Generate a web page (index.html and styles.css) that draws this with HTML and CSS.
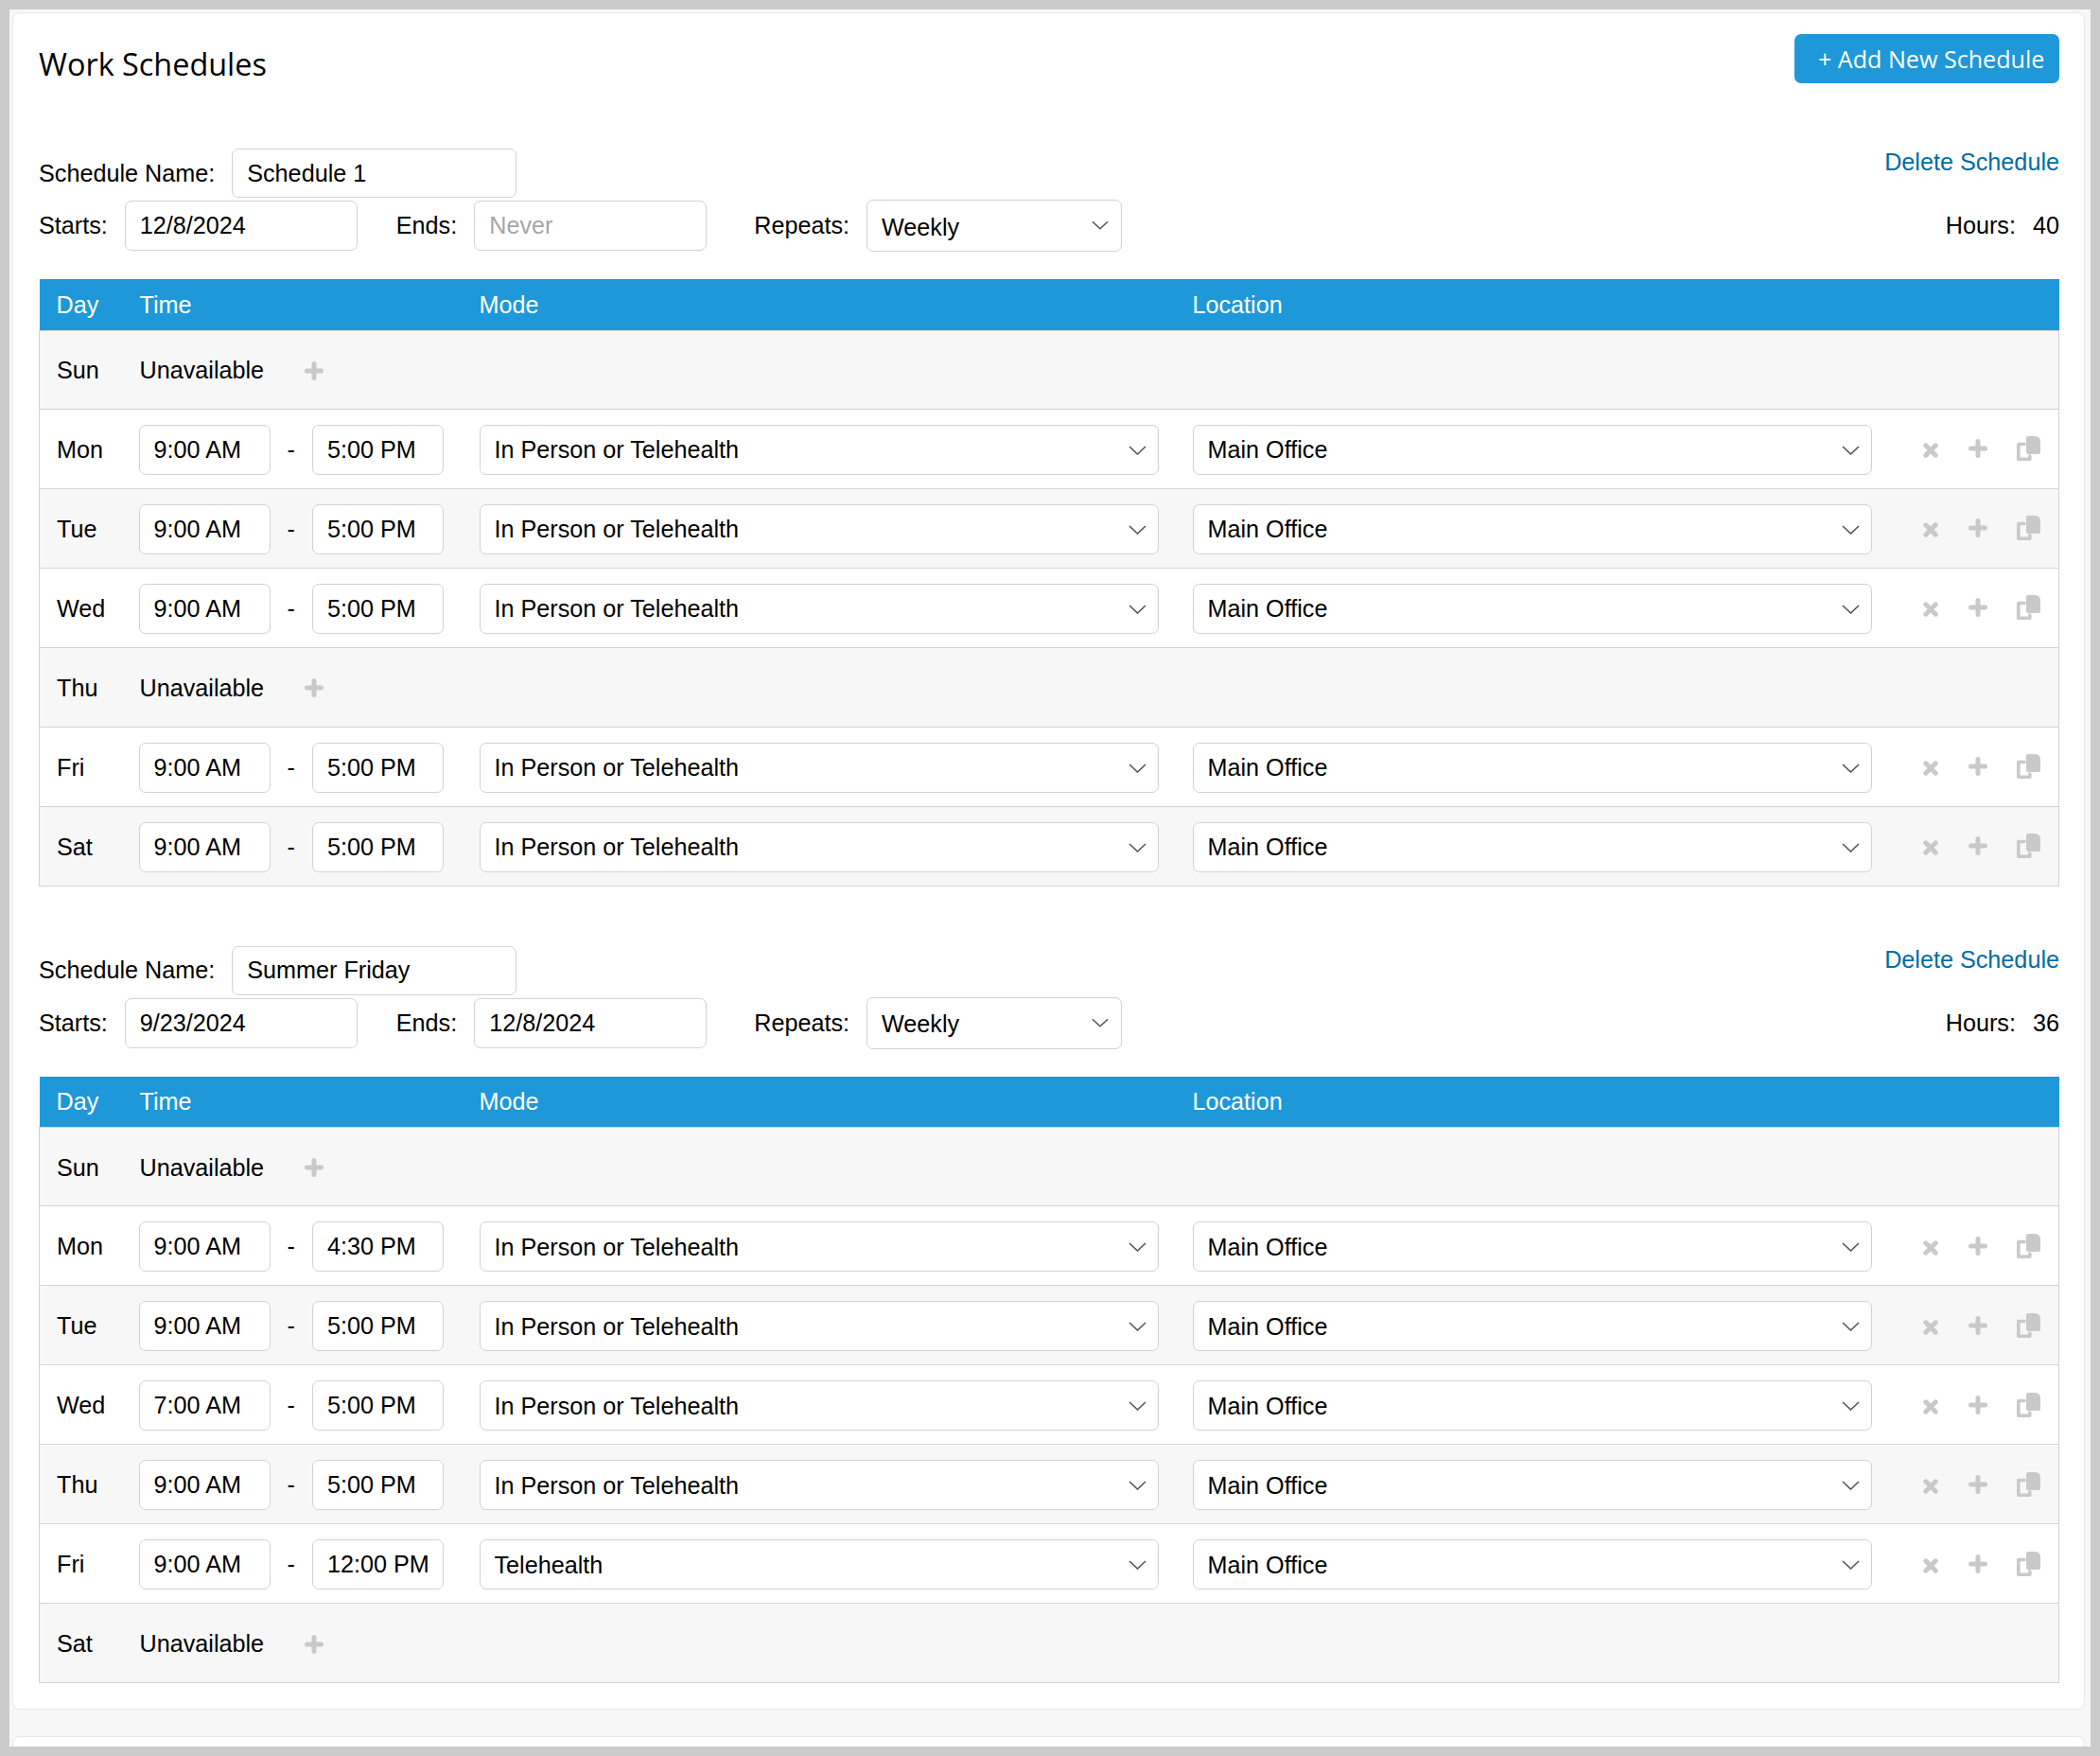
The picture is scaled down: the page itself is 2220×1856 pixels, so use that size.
FILE: index.html
```html
<!DOCTYPE html>
<html lang="en">
<head>
    <meta charset="UTF-8">
    <title>Work Schedules</title>
    <link rel="stylesheet" href="styles.css">
</head>
<body>
    <svg class="icon-defs" width="0" height="0">
        <symbol id="icon-x" viewBox="0 0 16 16">
            <path d="M2.800 2.800l10.400 10.400M13.200 2.800L2.800 13.200" fill="none" stroke="currentColor" stroke-width="5" stroke-linecap="round"></path>
        </symbol>
        <symbol id="icon-plus" viewBox="0 0 20 20">
            <path d="M10 2.500v15M2.500 10h15" fill="none" stroke="currentColor" stroke-width="5" stroke-linecap="round"></path>
        </symbol>
        <symbol id="icon-copy" viewBox="0 0 26 26">
            <path d="M8 8.500H1.800v15.700h12V21" fill="none" stroke="currentColor" stroke-width="3.600" stroke-linejoin="round" stroke-linecap="round"></path>
            <path d="M12 0h7.500a5.500 5.500 0 0 1 5.500 5.500V17a2 2 0 0 1-2 2H12a2 2 0 0 1-2-2V2a2 2 0 0 1 2-2z" fill="currentColor"></path>
        </symbol>
        <symbol id="icon-chevron" viewBox="0 0 19 10">
            <path d="M1 1l8.500 8L18 1" fill="none" stroke="currentColor" stroke-width="1.600"></path>
        </symbol>
    </svg>

    <div class="page">
        <div class="card">
            <div class="card-head">
                <h1 class="page-title">Work Schedules</h1>
                <button class="add-btn">+ Add New Schedule</button>
            </div>

            <!-- Schedule 1 -->
            <section class="schedule">
                <div class="schedule-top">
                    <div class="schedule-fields">
                        <div class="field-row">
                            <label>Schedule Name:</label>
                            <input class="input input-name" type="text" value="Schedule 1">
                        </div>
                        <div class="field-row field-row-dates">
                            <label>Starts:</label>
                            <input class="input input-date" type="text" value="12/8/2024">
                            <label class="label-ends">Ends:</label>
                            <input class="input input-date" type="text" placeholder="Never">
                            <label class="label-repeats">Repeats:</label>
                            <div class="select-wrap select-repeats">
                                <select class="select"><option>Weekly</option></select>
                                <svg class="chevron"><use href="#icon-chevron"></use></svg>
                            </div>
                        </div>
                    </div>
                    <div class="schedule-meta">
                        <a class="delete-link" href="#">Delete Schedule</a>
                        <div class="hours"><span>Hours:</span><span>40</span></div>
                    </div>
                </div>

                <table class="days">
                    <colgroup>
                        <col class="col-day"><col class="col-time"><col class="col-mode"><col class="col-location"><col>
                    </colgroup>
                    <thead>
                        <tr><th>Day</th><th>Time</th><th>Mode</th><th>Location</th><th></th></tr>
                    </thead>
                    <tbody>
                        <tr>
                            <td>Sun</td>
                            <td colspan="4"><div class="unavailable">Unavailable <svg class="icon icon-plus"><use href="#icon-plus"></use></svg></div></td>
                        </tr>
                        <tr>
                            <td>Mon</td>
                            <td><div class="time-range"><input class="input input-time" type="text" value="9:00 AM"><span>-</span><input class="input input-time" type="text" value="5:00 PM"></div></td>
                            <td><div class="select-wrap select-mode"><select class="select"><option>In Person or Telehealth</option></select><svg class="chevron"><use href="#icon-chevron"></use></svg></div></td>
                            <td><div class="select-wrap select-location"><select class="select"><option>Main Office</option></select><svg class="chevron"><use href="#icon-chevron"></use></svg></div></td>
                            <td><div class="row-actions"><svg class="icon icon-x"><use href="#icon-x"></use></svg><svg class="icon icon-plus"><use href="#icon-plus"></use></svg><svg class="icon icon-copy"><use href="#icon-copy"></use></svg></div></td>
                        </tr>
                        <tr>
                            <td>Tue</td>
                            <td><div class="time-range"><input class="input input-time" type="text" value="9:00 AM"><span>-</span><input class="input input-time" type="text" value="5:00 PM"></div></td>
                            <td><div class="select-wrap select-mode"><select class="select"><option>In Person or Telehealth</option></select><svg class="chevron"><use href="#icon-chevron"></use></svg></div></td>
                            <td><div class="select-wrap select-location"><select class="select"><option>Main Office</option></select><svg class="chevron"><use href="#icon-chevron"></use></svg></div></td>
                            <td><div class="row-actions"><svg class="icon icon-x"><use href="#icon-x"></use></svg><svg class="icon icon-plus"><use href="#icon-plus"></use></svg><svg class="icon icon-copy"><use href="#icon-copy"></use></svg></div></td>
                        </tr>
                        <tr>
                            <td>Wed</td>
                            <td><div class="time-range"><input class="input input-time" type="text" value="9:00 AM"><span>-</span><input class="input input-time" type="text" value="5:00 PM"></div></td>
                            <td><div class="select-wrap select-mode"><select class="select"><option>In Person or Telehealth</option></select><svg class="chevron"><use href="#icon-chevron"></use></svg></div></td>
                            <td><div class="select-wrap select-location"><select class="select"><option>Main Office</option></select><svg class="chevron"><use href="#icon-chevron"></use></svg></div></td>
                            <td><div class="row-actions"><svg class="icon icon-x"><use href="#icon-x"></use></svg><svg class="icon icon-plus"><use href="#icon-plus"></use></svg><svg class="icon icon-copy"><use href="#icon-copy"></use></svg></div></td>
                        </tr>
                        <tr>
                            <td>Thu</td>
                            <td colspan="4"><div class="unavailable">Unavailable <svg class="icon icon-plus"><use href="#icon-plus"></use></svg></div></td>
                        </tr>
                        <tr>
                            <td>Fri</td>
                            <td><div class="time-range"><input class="input input-time" type="text" value="9:00 AM"><span>-</span><input class="input input-time" type="text" value="5:00 PM"></div></td>
                            <td><div class="select-wrap select-mode"><select class="select"><option>In Person or Telehealth</option></select><svg class="chevron"><use href="#icon-chevron"></use></svg></div></td>
                            <td><div class="select-wrap select-location"><select class="select"><option>Main Office</option></select><svg class="chevron"><use href="#icon-chevron"></use></svg></div></td>
                            <td><div class="row-actions"><svg class="icon icon-x"><use href="#icon-x"></use></svg><svg class="icon icon-plus"><use href="#icon-plus"></use></svg><svg class="icon icon-copy"><use href="#icon-copy"></use></svg></div></td>
                        </tr>
                        <tr>
                            <td>Sat</td>
                            <td><div class="time-range"><input class="input input-time" type="text" value="9:00 AM"><span>-</span><input class="input input-time" type="text" value="5:00 PM"></div></td>
                            <td><div class="select-wrap select-mode"><select class="select"><option>In Person or Telehealth</option></select><svg class="chevron"><use href="#icon-chevron"></use></svg></div></td>
                            <td><div class="select-wrap select-location"><select class="select"><option>Main Office</option></select><svg class="chevron"><use href="#icon-chevron"></use></svg></div></td>
                            <td><div class="row-actions"><svg class="icon icon-x"><use href="#icon-x"></use></svg><svg class="icon icon-plus"><use href="#icon-plus"></use></svg><svg class="icon icon-copy"><use href="#icon-copy"></use></svg></div></td>
                        </tr>
                    </tbody>
                </table>
            </section>

            <!-- Summer Friday -->
            <section class="schedule">
                <div class="schedule-top">
                    <div class="schedule-fields">
                        <div class="field-row">
                            <label>Schedule Name:</label>
                            <input class="input input-name" type="text" value="Summer Friday">
                        </div>
                        <div class="field-row field-row-dates">
                            <label>Starts:</label>
                            <input class="input input-date" type="text" value="9/23/2024">
                            <label class="label-ends">Ends:</label>
                            <input class="input input-date" type="text" value="12/8/2024">
                            <label class="label-repeats">Repeats:</label>
                            <div class="select-wrap select-repeats">
                                <select class="select"><option>Weekly</option></select>
                                <svg class="chevron"><use href="#icon-chevron"></use></svg>
                            </div>
                        </div>
                    </div>
                    <div class="schedule-meta">
                        <a class="delete-link" href="#">Delete Schedule</a>
                        <div class="hours"><span>Hours:</span><span>36</span></div>
                    </div>
                </div>

                <table class="days">
                    <colgroup>
                        <col class="col-day"><col class="col-time"><col class="col-mode"><col class="col-location"><col>
                    </colgroup>
                    <thead>
                        <tr><th>Day</th><th>Time</th><th>Mode</th><th>Location</th><th></th></tr>
                    </thead>
                    <tbody>
                        <tr>
                            <td>Sun</td>
                            <td colspan="4"><div class="unavailable">Unavailable <svg class="icon icon-plus"><use href="#icon-plus"></use></svg></div></td>
                        </tr>
                        <tr>
                            <td>Mon</td>
                            <td><div class="time-range"><input class="input input-time" type="text" value="9:00 AM"><span>-</span><input class="input input-time" type="text" value="4:30 PM"></div></td>
                            <td><div class="select-wrap select-mode"><select class="select"><option>In Person or Telehealth</option></select><svg class="chevron"><use href="#icon-chevron"></use></svg></div></td>
                            <td><div class="select-wrap select-location"><select class="select"><option>Main Office</option></select><svg class="chevron"><use href="#icon-chevron"></use></svg></div></td>
                            <td><div class="row-actions"><svg class="icon icon-x"><use href="#icon-x"></use></svg><svg class="icon icon-plus"><use href="#icon-plus"></use></svg><svg class="icon icon-copy"><use href="#icon-copy"></use></svg></div></td>
                        </tr>
                        <tr>
                            <td>Tue</td>
                            <td><div class="time-range"><input class="input input-time" type="text" value="9:00 AM"><span>-</span><input class="input input-time" type="text" value="5:00 PM"></div></td>
                            <td><div class="select-wrap select-mode"><select class="select"><option>In Person or Telehealth</option></select><svg class="chevron"><use href="#icon-chevron"></use></svg></div></td>
                            <td><div class="select-wrap select-location"><select class="select"><option>Main Office</option></select><svg class="chevron"><use href="#icon-chevron"></use></svg></div></td>
                            <td><div class="row-actions"><svg class="icon icon-x"><use href="#icon-x"></use></svg><svg class="icon icon-plus"><use href="#icon-plus"></use></svg><svg class="icon icon-copy"><use href="#icon-copy"></use></svg></div></td>
                        </tr>
                        <tr>
                            <td>Wed</td>
                            <td><div class="time-range"><input class="input input-time" type="text" value="7:00 AM"><span>-</span><input class="input input-time" type="text" value="5:00 PM"></div></td>
                            <td><div class="select-wrap select-mode"><select class="select"><option>In Person or Telehealth</option></select><svg class="chevron"><use href="#icon-chevron"></use></svg></div></td>
                            <td><div class="select-wrap select-location"><select class="select"><option>Main Office</option></select><svg class="chevron"><use href="#icon-chevron"></use></svg></div></td>
                            <td><div class="row-actions"><svg class="icon icon-x"><use href="#icon-x"></use></svg><svg class="icon icon-plus"><use href="#icon-plus"></use></svg><svg class="icon icon-copy"><use href="#icon-copy"></use></svg></div></td>
                        </tr>
                        <tr>
                            <td>Thu</td>
                            <td><div class="time-range"><input class="input input-time" type="text" value="9:00 AM"><span>-</span><input class="input input-time" type="text" value="5:00 PM"></div></td>
                            <td><div class="select-wrap select-mode"><select class="select"><option>In Person or Telehealth</option></select><svg class="chevron"><use href="#icon-chevron"></use></svg></div></td>
                            <td><div class="select-wrap select-location"><select class="select"><option>Main Office</option></select><svg class="chevron"><use href="#icon-chevron"></use></svg></div></td>
                            <td><div class="row-actions"><svg class="icon icon-x"><use href="#icon-x"></use></svg><svg class="icon icon-plus"><use href="#icon-plus"></use></svg><svg class="icon icon-copy"><use href="#icon-copy"></use></svg></div></td>
                        </tr>
                        <tr>
                            <td>Fri</td>
                            <td><div class="time-range"><input class="input input-time" type="text" value="9:00 AM"><span>-</span><input class="input input-time" type="text" value="12:00 PM"></div></td>
                            <td><div class="select-wrap select-mode"><select class="select"><option>Telehealth</option></select><svg class="chevron"><use href="#icon-chevron"></use></svg></div></td>
                            <td><div class="select-wrap select-location"><select class="select"><option>Main Office</option></select><svg class="chevron"><use href="#icon-chevron"></use></svg></div></td>
                            <td><div class="row-actions"><svg class="icon icon-x"><use href="#icon-x"></use></svg><svg class="icon icon-plus"><use href="#icon-plus"></use></svg><svg class="icon icon-copy"><use href="#icon-copy"></use></svg></div></td>
                        </tr>
                        <tr>
                            <td>Sat</td>
                            <td colspan="4"><div class="unavailable">Unavailable <svg class="icon icon-plus"><use href="#icon-plus"></use></svg></div></td>
                        </tr>
                    </tbody>
                </table>
            </section>
        </div>

        <!-- Next card, cut off by the window -->
        <div class="card card-next"></div>
    </div>
</body>
</html>
```

FILE: styles.css
```css
* {
    margin: 0;
    padding: 0;
    box-sizing: border-box;
}

html, body {
    height: 1856px;
    overflow: hidden;
}

body {
    background: #cbcbcb;
    padding: 10px;
    font-family: "Liberation Sans", Arial, sans-serif;
    font-size: 25.2px;
    color: #000;
}

.icon-defs {
    position: absolute;
}

.page {
    height: 1836px;
    overflow: hidden;
    background: #f7f7f7;
    padding: 3px 6px 0 3px;
}

/* Card */
.card {
    background: #fff;
    border: 1px solid #e8e8e8;
    border-radius: 8px;
    height: 1794px;
    padding: 22px 26px 0 27px;
}

.card-next {
    height: 40px;
    margin-top: 28px;
}

.card-head {
    display: flex;
    justify-content: space-between;
    align-items: flex-start;
    height: 52px;
    margin-bottom: 69px;
}

.page-title {
    font-family: "Open Sans", sans-serif;
    font-size: 32.4px;
    font-weight: 400;
    line-height: 44px;
    padding-top: 9px;
}

.add-btn {
    height: 52px;
    width: 280px;
    padding: 0 16px 0 25px;
    border: none;
    border-radius: 7px;
    background: #1e98d9;
    color: #fff;
    font-family: "Open Sans", sans-serif;
    font-size: 25.1px;
    text-align: left;
    white-space: nowrap;
}

/* Schedule header */
.schedule + .schedule {
    margin-top: 63px;
}

.schedule-top {
    display: flex;
    justify-content: space-between;
    margin-bottom: 29px;
}

.field-row {
    display: flex;
    align-items: center;
    gap: 18px;
    height: 52px;
}

.field-row-dates {
    height: 55px;
    margin-top: 2px;
}

.label-ends {
    margin-left: 23px;
}

.label-repeats {
    margin-left: 32px;
}

.input,
.select {
    height: 53px;
    border: 1px solid #d2d2d2;
    border-radius: 7px;
    background: #fff;
    padding: 0 15px;
    font-family: inherit;
    font-size: 25.2px;
    color: #000;
    outline: none;
}

.input::placeholder {
    color: #a6a6a6;
}

.input-name {
    width: 301px;
    height: 52px;
}

.input-date {
    width: 246px;
}

.input-time {
    width: 139px;
}

.select-wrap {
    position: relative;
}

.select {
    display: block;
    width: 100%;
    appearance: none;
    -webkit-appearance: none;
}

.select-repeats {
    width: 270px;
}

.select-repeats .select {
    height: 55px;
    padding-top: 2px;
}

.select-mode {
    width: 718px;
}

.select-location {
    width: 718px;
}

.chevron {
    position: absolute;
    top: 22px;
    right: 13px;
    width: 19px;
    height: 10px;
    color: #555;
    pointer-events: none;
}

.select-repeats .chevron {
    width: 18px;
    right: 14px;
}

.schedule-meta {
    display: flex;
    flex-direction: column;
    justify-content: space-between;
    align-items: flex-end;
    padding-bottom: 14px;
    line-height: 28px;
}

.delete-link {
    color: #016da6;
    text-decoration: none;
}

.hours {
    display: flex;
    gap: 18px;
}

/* Day table */
.days {
    width: 2136px;
    table-layout: fixed;
    border-collapse: collapse;
}

.col-day {
    width: 106px;
}

.col-time {
    width: 359px;
}

.col-mode {
    width: 754px;
}

.col-location {
    width: 719px;
}

.days th {
    height: 54px;
    padding: 1px 0 0;
    background: #1e98d9;
    color: #fff;
    font-weight: 400;
    text-align: left;
}

.days th:first-child {
    padding-left: 18px;
}

.days td {
    height: 84px;
    padding: 2px 0 0;
    border-top: 1px solid #d4d4d4;
    border-bottom: 1px solid #d4d4d4;
}

.days tbody tr:first-child td {
    height: 83px;
}

.days td:first-child {
    padding-left: 18px;
    border-left: 1px solid #d4d4d4;
}

.days td:last-child {
    border-right: 1px solid #d4d4d4;
}

.days tbody tr:nth-child(odd) {
    background: #f7f7f7;
}

.time-range {
    display: flex;
    align-items: center;
    gap: 18px;
    margin-left: -1px;
}

.unavailable {
    display: flex;
    align-items: center;
    gap: 43px;
}

.icon {
    display: block;
    flex: none;
    color: #c9c9c9;
}

.icon-x {
    width: 16px;
    height: 16px;
    margin-top: 2px;
}

.icon-plus {
    width: 20px;
    height: 20px;
}

.icon-copy {
    width: 26px;
    height: 26px;
    margin-left: -1px;
}

.row-actions {
    display: flex;
    align-items: center;
    gap: 32px;
    padding-left: 53px;
}

.row-actions .icon-plus {
    margin-top: -2px;
}

.row-actions .icon-copy {
    margin-top: -2px;
}
```
